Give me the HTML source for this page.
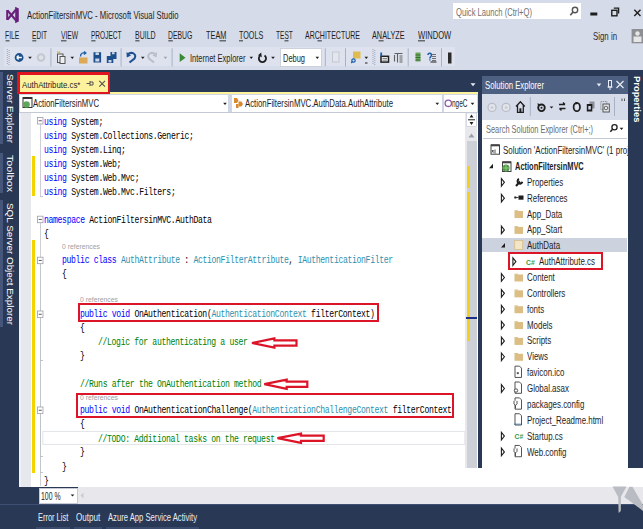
<!DOCTYPE html>
<html><head><meta charset="utf-8"><style>
html,body{margin:0;padding:0;}
body{width:643px;height:529px;overflow:hidden;position:relative;background:#d6dbe9;font-family:'Liberation Sans', sans-serif;}
.t{position:absolute;white-space:pre;transform-origin:0 0;}
.vt{position:absolute;white-space:pre;transform-origin:0 0;}
.mono{position:absolute;white-space:pre;transform-origin:0 0;font-family:'Liberation Mono', monospace;}
</style></head>
<body>
<div style="position:absolute;left:453px;top:3px;width:128px;height:16px;background:#ffffff;"></div><div style="position:absolute;left:4px;top:47px;width:450.5px;height:19px;background:#dde2ee;"></div><div style="position:absolute;left:279.5px;top:48px;width:42px;height:18.6px;background:#ffffff;box-sizing:border-box;border:1px solid #ccd1dc"></div><div style="position:absolute;left:0px;top:70px;width:643px;height:459px;background:#293955;"></div><div style="position:absolute;left:19px;top:92px;width:459px;height:2px;background:#fff29d;"></div><div style="position:absolute;left:17px;top:72px;width:93px;height:22px;background:#e0141e;"></div><div style="position:absolute;left:19.5px;top:74.5px;width:88px;height:17px;background:#fff29d;"></div><div style="position:absolute;left:19px;top:94px;width:459px;height:18px;background:#cfd6e5;"></div><div style="position:absolute;left:20px;top:95px;width:208px;height:16.5px;background:#ffffff;"></div><div style="position:absolute;left:231.5px;top:95px;width:210px;height:16.5px;background:#ffffff;"></div><div style="position:absolute;left:444px;top:95px;width:33px;height:16.5px;background:#ffffff;"></div><div style="position:absolute;left:19px;top:111.5px;width:459px;height:1px;background:#c4c9d6;"></div><div style="position:absolute;left:19px;top:112.5px;width:459px;height:374px;background:#ffffff;"></div><div style="position:absolute;left:19px;top:112.5px;width:12px;height:374px;background:#e6e8ed;"></div><div style="position:absolute;left:19px;top:112.5px;width:1.5px;height:374px;background:#eef2f6;"></div><div style="position:absolute;left:32px;top:155.5px;width:3.3px;height:40px;background:#f3d400;"></div><div style="position:absolute;left:32px;top:240px;width:3.3px;height:232.7px;background:#f3d400;"></div><div style="position:absolute;left:478px;top:468px;width:165px;height:19px;background:#ffffff;"></div><div style="position:absolute;left:465px;top:112.5px;width:12px;height:355.5px;background:#e8e8ec;"></div><div style="position:absolute;left:466.5px;top:141px;width:10px;height:327px;background:#cdd0d6;"></div><div style="position:absolute;left:467px;top:166px;width:3.3px;height:22px;background:#f0d020;"></div><div style="position:absolute;left:467px;top:191.6px;width:3.3px;height:149px;background:#f0d020;"></div><div style="position:absolute;left:466px;top:317.3px;width:11px;height:1.6px;background:#1c2f8c;"></div><div style="position:absolute;left:482px;top:75.5px;width:146px;height:392.5px;background:#ffffff;"></div><div style="position:absolute;left:482px;top:75.5px;width:146px;height:18px;background:#4d6082;"></div><div style="position:absolute;left:482px;top:93.5px;width:146px;height:26.5px;background:#d6dbe9;"></div><div style="position:absolute;left:482.5px;top:120px;width:144.5px;height:19px;background:#ffffff;box-sizing:border-box;border-bottom:1px solid #c4c9d6"></div><div style="position:absolute;left:0px;top:72px;width:3.2px;height:72px;background:#46567a;"></div><div style="position:absolute;left:0px;top:153px;width:3.2px;height:40px;background:#46567a;"></div><div style="position:absolute;left:0px;top:200px;width:3.2px;height:127px;background:#46567a;"></div><div style="position:absolute;left:628px;top:72px;width:15px;height:0px;background:#293955;"></div><div style="position:absolute;left:482px;top:237.5px;width:145px;height:14px;background:#cdd2df;"></div><div style="position:absolute;left:628px;top:70px;width:15px;height:398px;background:#293955;z-index:5"></div><div style="position:absolute;left:77.9px;top:302.6px;width:301.1px;height:19.899999999999977px;box-sizing:border-box;border:2.3px solid #dc1428;z-index:8"></div><div style="position:absolute;left:75.8px;top:392.7px;width:378.09999999999997px;height:25.30000000000001px;box-sizing:border-box;border:2.3px solid #dc1428;z-index:8"></div><div style="position:absolute;left:507.5px;top:252.3px;width:95.5px;height:18.0px;box-sizing:border-box;border:2.4px solid #dc1428;z-index:8"></div><svg style="position:absolute;left:0;top:0;z-index:8" width="643" height="529"><polygon points="252.00,343.00 274.40,338.40 274.40,340.40 296.50,340.40 296.50,345.60 274.40,345.60 274.40,347.60" fill="#ffffff" stroke="#dc1428" stroke-width="2.2" stroke-linejoin="miter"/></svg><svg style="position:absolute;left:0;top:0;z-index:8" width="643" height="529"><polygon points="264.30,384.20 286.70,379.60 286.70,381.60 307.30,381.60 307.30,386.80 286.70,386.80 286.70,388.80" fill="#ffffff" stroke="#dc1428" stroke-width="2.2" stroke-linejoin="miter"/></svg><svg style="position:absolute;left:0;top:0;z-index:8" width="643" height="529"><polygon points="277.50,438.20 301.00,433.60 301.00,435.60 323.70,435.60 323.70,440.80 301.00,440.80 301.00,442.80" fill="#ffffff" stroke="#dc1428" stroke-width="2.2" stroke-linejoin="miter"/></svg><div style="position:absolute;left:38.5px;top:487.5px;width:39px;height:16px;background:#ffffff;box-sizing:border-box;border:1px solid #c5cad6"></div><div style="position:absolute;left:36px;top:527px;width:34px;height:2px;background:#3b4b6e;"></div><div style="position:absolute;left:74px;top:527px;width:28px;height:2px;background:#3b4b6e;"></div><div style="position:absolute;left:105.5px;top:527px;width:93px;height:2px;background:#3b4b6e;"></div><div style="position:absolute;left:77.5px;top:487px;width:566px;height:16.5px;background:#e8e8ec;"></div><div style="position:absolute;left:0px;top:503.5px;width:643px;height:1px;background:#3f5075;"></div>
<div class="t" style="left:27.00px;top:9.59px;font:400 11.3px/11.3px 'Liberation Sans', sans-serif;color:#1e1e1e;transform:scaleX(0.6862);">ActionFiltersinMVC - Microsoft Visual Studio</div>
<div class="t" style="left:456.00px;top:6.88px;font:400 10.5px/10.5px 'Liberation Sans', sans-serif;color:#717171;transform:scaleX(0.7255);">Quick Launch (Ctrl+Q)</div>
<div class="t" style="left:593.00px;top:31.12px;font:400 10.8px/10.8px 'Liberation Sans', sans-serif;color:#2d2d30;transform:scaleX(0.7269);">Sign in</div>
<div class="t" style="left:5.40px;top:31.36px;font:400 10.4px/10.4px 'Liberation Sans', sans-serif;color:#1e1e1e;transform:scaleX(0.6514);">FILE</div>
<div class="t" style="left:32.00px;top:31.36px;font:400 10.4px/10.4px 'Liberation Sans', sans-serif;color:#1e1e1e;transform:scaleX(0.6337);">EDIT</div>
<div class="t" style="left:60.80px;top:31.36px;font:400 10.4px/10.4px 'Liberation Sans', sans-serif;color:#1e1e1e;transform:scaleX(0.6475);">VIEW</div>
<div class="t" style="left:91.00px;top:31.36px;font:400 10.4px/10.4px 'Liberation Sans', sans-serif;color:#1e1e1e;transform:scaleX(0.6309);">PROJECT</div>
<div class="t" style="left:135.00px;top:31.36px;font:400 10.4px/10.4px 'Liberation Sans', sans-serif;color:#1e1e1e;transform:scaleX(0.6730);">BUILD</div>
<div class="t" style="left:168.00px;top:31.36px;font:400 10.4px/10.4px 'Liberation Sans', sans-serif;color:#1e1e1e;transform:scaleX(0.6603);">DEBUG</div>
<div class="t" style="left:205.60px;top:31.36px;font:400 10.4px/10.4px 'Liberation Sans', sans-serif;color:#1e1e1e;transform:scaleX(0.7065);">TEAM</div>
<div class="t" style="left:238.70px;top:31.36px;font:400 10.4px/10.4px 'Liberation Sans', sans-serif;color:#1e1e1e;transform:scaleX(0.6934);">TOOLS</div>
<div class="t" style="left:276.00px;top:31.36px;font:400 10.4px/10.4px 'Liberation Sans', sans-serif;color:#1e1e1e;transform:scaleX(0.6325);">TEST</div>
<div class="t" style="left:305.00px;top:31.36px;font:400 10.4px/10.4px 'Liberation Sans', sans-serif;color:#1e1e1e;transform:scaleX(0.6756);">ARCHITECTURE</div>
<div class="t" style="left:372.00px;top:31.36px;font:400 10.4px/10.4px 'Liberation Sans', sans-serif;color:#1e1e1e;transform:scaleX(0.7018);">ANALYZE</div>
<div class="t" style="left:417.80px;top:31.36px;font:400 10.4px/10.4px 'Liberation Sans', sans-serif;color:#1e1e1e;transform:scaleX(0.7282);">WINDOW</div>
<div class="t" style="left:21.60px;top:79.97px;font:400 9.8px/9.8px 'Liberation Sans', sans-serif;color:#1e1e1e;transform:scaleX(0.8002);">AuthAttribute.cs*</div>
<div class="t" style="left:13.90px;top:74.00px;font:400 9.3px/9.3px 'Liberation Sans', sans-serif;color:#ffffff;transform:rotate(90deg) scaleX(1.0682);">Server Explorer</div>
<div class="t" style="left:13.90px;top:155.00px;font:400 9.3px/9.3px 'Liberation Sans', sans-serif;color:#ffffff;transform:rotate(90deg) scaleX(1.1546);">Toolbox</div>
<div class="t" style="left:13.90px;top:203.00px;font:400 9.3px/9.3px 'Liberation Sans', sans-serif;color:#ffffff;transform:rotate(90deg) scaleX(1.0619);">SQL Server Object Explorer</div>
<div class="t" style="left:642.25px;top:75.60px;font:700 9.8px/9.8px 'Liberation Sans', sans-serif;color:#ffffff;transform:rotate(90deg) scaleX(0.9573);z-index:6;">Properties</div>
<div class="t" style="left:484.50px;top:80.08px;font:400 10.5px/10.5px 'Liberation Sans', sans-serif;color:#ffffff;transform:scaleX(0.7378);">Solution Explorer</div>
<div class="t" style="left:485.50px;top:123.58px;font:400 10.5px/10.5px 'Liberation Sans', sans-serif;color:#6d6d6d;transform:scaleX(0.7066);">Search Solution Explorer (Ctrl+;)</div>
<div class="t" style="left:503.30px;top:145.17px;font:400 10.5px/10.5px 'Liberation Sans', sans-serif;color:#1e1e1e;transform:scaleX(0.755);">Solution &#x27;ActionFiltersinMVC&#x27; (1 project)</div>
<div class="t" style="left:515.00px;top:161.03px;font:700 10.5px/10.5px 'Liberation Sans', sans-serif;color:#1e1e1e;transform:scaleX(0.71);">ActionFiltersinMVC</div>
<div class="t" style="left:526.60px;top:176.89px;font:400 10.5px/10.5px 'Liberation Sans', sans-serif;color:#1e1e1e;transform:scaleX(0.755);">Properties</div>
<div class="t" style="left:526.60px;top:192.75px;font:400 10.5px/10.5px 'Liberation Sans', sans-serif;color:#1e1e1e;transform:scaleX(0.755);">References</div>
<div class="t" style="left:526.60px;top:208.61px;font:400 10.5px/10.5px 'Liberation Sans', sans-serif;color:#1e1e1e;transform:scaleX(0.755);">App_Data</div>
<div class="t" style="left:526.60px;top:224.47px;font:400 10.5px/10.5px 'Liberation Sans', sans-serif;color:#1e1e1e;transform:scaleX(0.755);">App_Start</div>
<div class="t" style="left:526.60px;top:240.33px;font:400 10.5px/10.5px 'Liberation Sans', sans-serif;color:#1e1e1e;transform:scaleX(0.755);">AuthData</div>
<div class="t" style="left:538.60px;top:256.19px;font:400 10.5px/10.5px 'Liberation Sans', sans-serif;color:#1e1e1e;transform:scaleX(0.755);">AuthAttribute.cs</div>
<div class="t" style="left:526.60px;top:272.06px;font:400 10.5px/10.5px 'Liberation Sans', sans-serif;color:#1e1e1e;transform:scaleX(0.755);">Content</div>
<div class="t" style="left:526.60px;top:287.92px;font:400 10.5px/10.5px 'Liberation Sans', sans-serif;color:#1e1e1e;transform:scaleX(0.755);">Controllers</div>
<div class="t" style="left:526.60px;top:303.77px;font:400 10.5px/10.5px 'Liberation Sans', sans-serif;color:#1e1e1e;transform:scaleX(0.755);">fonts</div>
<div class="t" style="left:526.60px;top:319.63px;font:400 10.5px/10.5px 'Liberation Sans', sans-serif;color:#1e1e1e;transform:scaleX(0.755);">Models</div>
<div class="t" style="left:526.60px;top:335.49px;font:400 10.5px/10.5px 'Liberation Sans', sans-serif;color:#1e1e1e;transform:scaleX(0.755);">Scripts</div>
<div class="t" style="left:526.60px;top:351.35px;font:400 10.5px/10.5px 'Liberation Sans', sans-serif;color:#1e1e1e;transform:scaleX(0.755);">Views</div>
<div class="t" style="left:526.60px;top:367.21px;font:400 10.5px/10.5px 'Liberation Sans', sans-serif;color:#1e1e1e;transform:scaleX(0.755);">favicon.ico</div>
<div class="t" style="left:526.60px;top:383.07px;font:400 10.5px/10.5px 'Liberation Sans', sans-serif;color:#1e1e1e;transform:scaleX(0.755);">Global.asax</div>
<div class="t" style="left:526.60px;top:398.94px;font:400 10.5px/10.5px 'Liberation Sans', sans-serif;color:#1e1e1e;transform:scaleX(0.755);">packages.config</div>
<div class="t" style="left:526.60px;top:414.80px;font:400 10.5px/10.5px 'Liberation Sans', sans-serif;color:#1e1e1e;transform:scaleX(0.755);">Project_Readme.html</div>
<div class="t" style="left:526.60px;top:430.66px;font:400 10.5px/10.5px 'Liberation Sans', sans-serif;color:#1e1e1e;transform:scaleX(0.755);">Startup.cs</div>
<div class="t" style="left:526.60px;top:446.51px;font:400 10.5px/10.5px 'Liberation Sans', sans-serif;color:#1e1e1e;transform:scaleX(0.755);">Web.config</div>
<div class="t" style="left:40.50px;top:490.88px;font:400 10.5px/10.5px 'Liberation Sans', sans-serif;color:#1e1e1e;transform:scaleX(0.6548);">100 %</div>
<div class="t" style="left:38.00px;top:511.68px;font:400 10.5px/10.5px 'Liberation Sans', sans-serif;color:#f0f3f8;transform:scaleX(0.7090);">Error List</div>
<div class="t" style="left:76.00px;top:511.68px;font:400 10.5px/10.5px 'Liberation Sans', sans-serif;color:#e8ecf4;transform:scaleX(0.7675);">Output</div>
<div class="t" style="left:107.70px;top:511.68px;font:400 10.5px/10.5px 'Liberation Sans', sans-serif;color:#e8ecf4;transform:scaleX(0.7296);">Azure App Service Activity</div>
<div class="t" style="left:32.80px;top:97.89px;font:400 11.3px/11.3px 'Liberation Sans', sans-serif;color:#1e1e1e;transform:scaleX(0.6872);">ActionFiltersinMVC</div>
<div class="t" style="left:244.50px;top:97.89px;font:400 11.3px/11.3px 'Liberation Sans', sans-serif;color:#1e1e1e;transform:scaleX(0.6892);">ActionFiltersinMVC.AuthData.AuthAttribute</div>
<div class="t" style="left:452.00px;top:97.89px;font:400 11.3px/11.3px 'Liberation Sans', sans-serif;color:#1e1e1e;transform:scaleX(0.5737);">ngeC</div>
<div class="t" style="left:190.00px;top:53.08px;font:400 10.5px/10.5px 'Liberation Sans', sans-serif;color:#1e1e1e;transform:scaleX(0.7150);">Internet Explorer</div>
<div class="t" style="left:282.80px;top:53.15px;font:400 11px/11px 'Liberation Sans', sans-serif;color:#1e1e1e;transform:scaleX(0.6786);">Debug</div>
<div class="t" style="left:62.00px;top:242.90px;font:400 8px/8px 'Liberation Sans', sans-serif;color:#a0a0a0;transform:scaleX(0.8545);">0 references</div>
<div class="t" style="left:80.00px;top:295.50px;font:400 8px/8px 'Liberation Sans', sans-serif;color:#a0a0a0;transform:scaleX(0.8545);">0 references</div>
<div class="t" style="left:80.00px;top:394.20px;font:400 8px/8px 'Liberation Sans', sans-serif;color:#a0a0a0;transform:scaleX(0.8545);">0 references</div>
<div class="mono" style="left:44.00px;top:116.64px;font-size:11px;line-height:11px;letter-spacing:-0.478px;transform:scaleX(0.7400)"><span style="color:#0000ff">using</span><span style="color:#000000"> System;</span></div>
<div class="mono" style="left:44.00px;top:130.64px;font-size:11px;line-height:11px;letter-spacing:-0.478px;transform:scaleX(0.7400)"><span style="color:#0000ff">using</span><span style="color:#000000"> System.Collections.Generic;</span></div>
<div class="mono" style="left:44.00px;top:144.64px;font-size:11px;line-height:11px;letter-spacing:-0.478px;transform:scaleX(0.7400)"><span style="color:#0000ff">using</span><span style="color:#000000"> System.Linq;</span></div>
<div class="mono" style="left:44.00px;top:158.64px;font-size:11px;line-height:11px;letter-spacing:-0.478px;transform:scaleX(0.7400)"><span style="color:#0000ff">using</span><span style="color:#000000"> System.Web;</span></div>
<div class="mono" style="left:44.00px;top:172.64px;font-size:11px;line-height:11px;letter-spacing:-0.478px;transform:scaleX(0.7400)"><span style="color:#0000ff">using</span><span style="color:#000000"> System.Web.Mvc;</span></div>
<div class="mono" style="left:44.00px;top:186.64px;font-size:11px;line-height:11px;letter-spacing:-0.478px;transform:scaleX(0.7400)"><span style="color:#0000ff">using</span><span style="color:#000000"> System.Web.Mvc.Filters;</span></div>
<div class="mono" style="left:44.00px;top:215.14px;font-size:11px;line-height:11px;letter-spacing:-0.478px;transform:scaleX(0.7400)"><span style="color:#0000ff">namespace</span><span style="color:#000000"> ActionFiltersinMVC.AuthData</span></div>
<div class="mono" style="left:44.00px;top:229.14px;font-size:11px;line-height:11px;letter-spacing:-0.478px;transform:scaleX(0.7400)"><span style="color:#000000">{</span></div>
<div class="mono" style="left:62.12px;top:254.94px;font-size:11px;line-height:11px;letter-spacing:-0.478px;transform:scaleX(0.7400)"><span style="color:#0000ff">public</span><span style="color:#000000"> </span><span style="color:#0000ff">class</span><span style="color:#000000"> </span><span style="color:#2b91af">AuthAttribute</span><span style="color:#000000"> : </span><span style="color:#2b91af">ActionFilterAttribute</span><span style="color:#000000">, </span><span style="color:#2b91af">IAuthenticationFilter</span></div>
<div class="mono" style="left:62.12px;top:269.14px;font-size:11px;line-height:11px;letter-spacing:-0.478px;transform:scaleX(0.7400)"><span style="color:#000000">{</span></div>
<div class="mono" style="left:80.24px;top:309.14px;font-size:11px;line-height:11px;letter-spacing:-0.478px;transform:scaleX(0.7400)"><span style="color:#0000ff">public</span><span style="color:#000000"> </span><span style="color:#0000ff">void</span><span style="color:#000000"> OnAuthentication(</span><span style="color:#2b91af">AuthenticationContext</span><span style="color:#000000"> filterContext)</span></div>
<div class="mono" style="left:80.24px;top:323.14px;font-size:11px;line-height:11px;letter-spacing:-0.478px;transform:scaleX(0.7400)"><span style="color:#000000">{</span></div>
<div class="mono" style="left:98.36px;top:336.64px;font-size:11px;line-height:11px;letter-spacing:-0.478px;transform:scaleX(0.7400)"><span style="color:#008000">//Logic for authenticating a user</span></div>
<div class="mono" style="left:80.24px;top:350.64px;font-size:11px;line-height:11px;letter-spacing:-0.478px;transform:scaleX(0.7400)"><span style="color:#000000">}</span></div>
<div class="mono" style="left:80.24px;top:379.14px;font-size:11px;line-height:11px;letter-spacing:-0.478px;transform:scaleX(0.7400)"><span style="color:#008000">//Runs after the OnAuthentication method</span></div>
<div class="mono" style="left:80.24px;top:405.14px;font-size:11px;line-height:11px;letter-spacing:-0.478px;transform:scaleX(0.7400)"><span style="color:#0000ff">public</span><span style="color:#000000"> </span><span style="color:#0000ff">void</span><span style="color:#000000"> OnAuthenticationChallenge(</span><span style="color:#2b91af">AuthenticationChallengeContext</span><span style="color:#000000"> filterContext</span></div>
<div class="mono" style="left:80.24px;top:419.14px;font-size:11px;line-height:11px;letter-spacing:-0.478px;transform:scaleX(0.7400)"><span style="color:#000000">{</span></div>
<div class="mono" style="left:98.36px;top:433.54px;font-size:11px;line-height:11px;letter-spacing:-0.478px;transform:scaleX(0.7400)"><span style="color:#008000">//TODO: Additional tasks on the request</span></div>
<div class="mono" style="left:80.24px;top:447.14px;font-size:11px;line-height:11px;letter-spacing:-0.478px;transform:scaleX(0.7400)"><span style="color:#000000">}</span></div>
<div class="mono" style="left:62.12px;top:461.64px;font-size:11px;line-height:11px;letter-spacing:-0.478px;transform:scaleX(0.7400)"><span style="color:#000000">}</span></div>
<div class="mono" style="left:44.00px;top:475.64px;font-size:11px;line-height:11px;letter-spacing:-0.478px;transform:scaleX(0.7400)"><span style="color:#000000">}</span></div>
<svg style="position:absolute;left:0;top:0;z-index:7" width="643" height="529" viewBox="0 0 643 529"><g fill="none" stroke="#68217a" stroke-width="2" stroke-linecap="butt"><path d="M7.2,10 L7.2,20"/><path d="M7.5,10.5 L16.5,21"/><path d="M7.5,19.5 L16.5,9"/></g><polygon points="15.2,6.8 18.8,8.6 18.8,21.6 15.2,23.3" fill="#68217a"/><circle cx="575" cy="10" r="2.7" fill="none" stroke="#555" stroke-width="1.4"/><path d="M573,12 L570.3,15.3" stroke="#555" stroke-width="1.6"/><rect x="590.3" y="12.5" width="7" height="3" fill="#1e1e1e"/><rect x="611.8" y="10.3" width="5.2" height="5.5" fill="none" stroke="#1e1e1e" stroke-width="1.4"/><path d="M613.8,8.2 H618.6 V13.5" fill="none" stroke="#1e1e1e" stroke-width="1.3"/><path d="M634.3,9.8 L640.5,16 M640.5,9.8 L634.3,16" stroke="#1e1e1e" stroke-width="1.4"/><rect x="631.6" y="29" width="12" height="14.3" fill="#8d8f94"/><circle cx="637.5" cy="33.5" r="2.2" fill="#e6e6e6"/><rect x="633.5" y="36.5" width="8" height="5.5" fill="#e6e6e6"/><rect x="5.6" y="40.4" width="3.9000000000000004" height="0.9" fill="#1e1e1e"/><rect x="32.3" y="40.4" width="4.0" height="0.9" fill="#1e1e1e"/><rect x="61" y="40.4" width="5.5" height="0.9" fill="#1e1e1e"/><rect x="91.3" y="40.4" width="4.200000000000003" height="0.9" fill="#1e1e1e"/><rect x="135.3" y="40.4" width="4.199999999999989" height="0.9" fill="#1e1e1e"/><rect x="168.3" y="40.4" width="4.5" height="0.9" fill="#1e1e1e"/><rect x="219.5" y="40.4" width="6.5" height="0.9" fill="#1e1e1e"/><rect x="239" y="40.4" width="4" height="0.9" fill="#1e1e1e"/><rect x="284.5" y="40.4" width="4.0" height="0.9" fill="#1e1e1e"/><rect x="317.5" y="40.4" width="4.300000000000011" height="0.9" fill="#1e1e1e"/><rect x="378.6" y="40.4" width="5.0" height="0.9" fill="#1e1e1e"/><rect x="418" y="40.4" width="7" height="0.9" fill="#1e1e1e"/><rect x="6.8" y="49" width="1" height="1" fill="#9aa3b5"/><rect x="8.6" y="50" width="1" height="1" fill="#9aa3b5"/><rect x="6.8" y="51" width="1" height="1" fill="#9aa3b5"/><rect x="8.6" y="52" width="1" height="1" fill="#9aa3b5"/><rect x="6.8" y="53" width="1" height="1" fill="#9aa3b5"/><rect x="8.6" y="54" width="1" height="1" fill="#9aa3b5"/><rect x="6.8" y="55" width="1" height="1" fill="#9aa3b5"/><rect x="8.6" y="56" width="1" height="1" fill="#9aa3b5"/><rect x="6.8" y="57" width="1" height="1" fill="#9aa3b5"/><rect x="8.6" y="58" width="1" height="1" fill="#9aa3b5"/><rect x="6.8" y="59" width="1" height="1" fill="#9aa3b5"/><rect x="8.6" y="60" width="1" height="1" fill="#9aa3b5"/><rect x="6.8" y="61" width="1" height="1" fill="#9aa3b5"/><rect x="8.6" y="62" width="1" height="1" fill="#9aa3b5"/><rect x="6.8" y="63" width="1" height="1" fill="#9aa3b5"/><rect x="8.6" y="64" width="1" height="1" fill="#9aa3b5"/><rect x="372.5" y="49" width="1" height="1" fill="#9aa3b5"/><rect x="374.3" y="50" width="1" height="1" fill="#9aa3b5"/><rect x="372.5" y="51" width="1" height="1" fill="#9aa3b5"/><rect x="374.3" y="52" width="1" height="1" fill="#9aa3b5"/><rect x="372.5" y="53" width="1" height="1" fill="#9aa3b5"/><rect x="374.3" y="54" width="1" height="1" fill="#9aa3b5"/><rect x="372.5" y="55" width="1" height="1" fill="#9aa3b5"/><rect x="374.3" y="56" width="1" height="1" fill="#9aa3b5"/><rect x="372.5" y="57" width="1" height="1" fill="#9aa3b5"/><rect x="374.3" y="58" width="1" height="1" fill="#9aa3b5"/><rect x="372.5" y="59" width="1" height="1" fill="#9aa3b5"/><rect x="374.3" y="60" width="1" height="1" fill="#9aa3b5"/><rect x="372.5" y="61" width="1" height="1" fill="#9aa3b5"/><rect x="374.3" y="62" width="1" height="1" fill="#9aa3b5"/><rect x="372.5" y="63" width="1" height="1" fill="#9aa3b5"/><rect x="374.3" y="64" width="1" height="1" fill="#9aa3b5"/><circle cx="19.1" cy="57.5" r="4.4" fill="#1c4f8d"/><path d="M16.6,57.5 H21.8 M16.6,57.5 L18.6,55.5 M16.6,57.5 L18.6,59.5" stroke="#fff" stroke-width="1.3"/><circle cx="41" cy="57.5" r="4.3" fill="#c3c7cf"/><circle cx="41" cy="57.5" r="2.3" fill="#dfe2e8"/><polygon points="28.2,56.699999999999996 31.8,56.699999999999996 30,58.9" fill="#1e1e1e"/><polygon points="70.5,56.699999999999996 74.1,56.699999999999996 72.3,58.9" fill="#1e1e1e"/><polygon points="141.0,56.699999999999996 144.60000000000002,56.699999999999996 142.8,58.9" fill="#1e1e1e"/><polygon points="249.5,56.699999999999996 253.10000000000002,56.699999999999996 251.3,58.9" fill="#1e1e1e"/><polygon points="271.2,56.699999999999996 274.8,56.699999999999996 273,58.9" fill="#1e1e1e"/><polygon points="315.5,56.699999999999996 319.1,56.699999999999996 317.3,58.9" fill="#1e1e1e"/><polygon points="364.5,56.699999999999996 368.1,56.699999999999996 366.3,58.9" fill="#1e1e1e"/><polygon points="163.6,56.699999999999996 167.20000000000002,56.699999999999996 165.4,58.9" fill="#9aa0aa"/><rect x="50.4" y="48.3" width="1" height="18.10000000000001" fill="#a9b2c4"/><rect x="120.6" y="48.3" width="1" height="18.10000000000001" fill="#a9b2c4"/><rect x="171.6" y="48.3" width="1" height="18.10000000000001" fill="#a9b2c4"/><rect x="324.8" y="48.3" width="1" height="18.10000000000001" fill="#a9b2c4"/><rect x="345" y="48.3" width="1" height="18.10000000000001" fill="#a9b2c4"/><rect x="407.7" y="48.3" width="1" height="18.10000000000001" fill="#a9b2c4"/><rect x="441" y="48.3" width="1" height="18.10000000000001" fill="#a9b2c4"/><rect x="57.5" y="54" width="5.5" height="8.5" fill="#eef0f4" stroke="#555" stroke-width="1"/><rect x="60" y="56.5" width="5" height="7" fill="#eef0f4" stroke="#555" stroke-width="1"/><path d="M57.2,51.5 l1.5,1.5 l1.5,-1.5" stroke="#c9b86a" stroke-width="1.2" fill="none"/><rect x="79" y="57.5" width="8.5" height="6" fill="#dcaa55"/><path d="M80.5,56.5 C80.5,53 83,52.5 85,53 M84,51.5 L85.8,53 L84,54.6" stroke="#1c5fa8" stroke-width="1.4" fill="none"/><rect x="93.5" y="52.2" width="7.6" height="10.3" fill="#1c4f8d"/><rect x="95.5" y="52.4" width="3.4" height="2.6" fill="#cfd6e5"/><rect x="95.3" y="58.5" width="4" height="3" fill="#cfd6e5"/><rect x="110.5" y="52" width="6" height="7" fill="#1c4f8d"/><rect x="106.8" y="56" width="6.5" height="7" fill="#1c4f8d"/><rect x="108.5" y="60" width="3" height="2.5" fill="#cfd6e5"/><rect x="112" y="52.2" width="2.6" height="2" fill="#cfd6e5"/><path d="M127.3,54.5 C132,51 137,54 134.5,58.5 L129.5,62.5" stroke="#1c4f8d" stroke-width="2" fill="none"/><polygon points="126.5,52 126.8,57.5 131,55.5" fill="#1c4f8d"/><path d="M156,54.5 C151.5,51 146.5,54 149,58.5 L154,62.5" stroke="#b9bec8" stroke-width="2" fill="none"/><polygon points="157,52 156.7,57.5 152.5,55.5" fill="#b9bec8"/><polygon points="179.7,53.3 185.5,57.7 179.7,62.1" fill="#388a34"/><path d="M264.5,55.5 A3.6,3.6 0 1 1 259.8,56" stroke="#1e1e1e" stroke-width="1.8" fill="none"/><polygon points="261.2,52.4 261.8,57.2 258,55.2" fill="#1e1e1e"/><rect x="332.5" y="52" width="6.5" height="10" fill="#e3e6ec" stroke="#c3c7d0" stroke-width="1"/><rect x="353" y="51.5" width="7.5" height="7" fill="#e0bb50"/><circle cx="353.5" cy="60.5" r="1.7" fill="none" stroke="#1c5fa8" stroke-width="1.2"/><path d="M352.5,61.5 L351.2,63" stroke="#1c5fa8" stroke-width="1.2"/><rect x="365" y="62.5" width="2.5" height="1" fill="#1e1e1e"/><rect x="381" y="56.3" width="7.5" height="5.8" fill="#f2f4f8" stroke="#1e1e1e" stroke-width="1.5"/><path d="M382.5,58.5 h4.5 M382.5,60.2 h4.5" stroke="#555" stroke-width="0.7"/><path d="M381.2,52.5 v4" stroke="#1c5fa8" stroke-width="1.8"/><path d="M394.5,55 v6.5 M394.5,53.5 h8 M397.5,53.5 v9 M399.5,56 h3 M399.5,58 h3 M399.5,60 h3 M399.5,62 h3" stroke="#606060" stroke-width="1.1" fill="none"/><rect x="415.5" y="52.5" width="5" height="9" fill="#6aa85a"/><path d="M415.5,55 h5 M415.5,57.5 h5 M415.5,60 h5" stroke="#2d4a2a" stroke-width="0.7"/><path d="M428,55 C428,52.5 431.5,52.5 431.5,55 C431.5,56.5 429.8,56.8 429.8,58.5" stroke="#1c5fa8" stroke-width="1.5" fill="none"/><rect x="429.2" y="59.3" width="1.3" height="1.3" fill="#1c5fa8"/><path d="M432,54.5 h4 M432,56.5 h4 M432,58.5 h4 M432,60.5 h4" stroke="#707070" stroke-width="1"/><path d="M430.5,62 h6" stroke="#1e1e1e" stroke-width="1"/><rect x="448" y="52.5" width="3.5" height="11" fill="#2a2a2a"/><path d="M86.5,83.5 H90 M90,81 V86 M90,82 H93 V85 H90" stroke="#555" stroke-width="1" fill="none"/><path d="M99.3,80.8 L105,86.7 M105,80.8 L99.3,86.7" stroke="#555" stroke-width="1.2"/><polygon points="470.5,83.3 475.5,83.3 473,86.3" fill="#e8ecf4"/><rect x="23" y="97.5" width="9" height="10" fill="#fff" stroke="#333" stroke-width="1"/><rect x="23" y="97" width="9" height="2" fill="#333"/><circle cx="26.5" cy="104.5" r="3.3" fill="#5fa55a"/><polygon points="223.2,102.7 226.8,102.7 225,104.89999999999999" fill="#1e1e1e"/><polygon points="435.5,102.7 439.1,102.7 437.3,104.89999999999999" fill="#1e1e1e"/><polygon points="470.7,102.7 474.3,102.7 472.5,104.89999999999999" fill="#1e1e1e"/><rect x="228" y="95" width="3.5" height="16.5" fill="#cfd6e5"/><path d="M234,98 l3,0 l1.5,2.5 l-1.5,2.5 l-3,0 z M238.5,101.5 l3,0 l1.5,2.5 l-1.5,2.5 l-3,0 z" fill="#d9892f"/><rect x="236" y="104" width="2.5" height="4" fill="#d9892f"/><circle cx="448.3" cy="103.3" r="3.2" fill="none" stroke="#8e5aa8" stroke-width="1.3"/><rect x="466.5" y="113" width="10" height="13.5" fill="#fff" stroke="#ccd" stroke-width="0.7"/><path d="M468,119.8 h7" stroke="#1e1e1e" stroke-width="1"/><polygon points="469.5,117.5 473.5,117.5 471.5,114.5" fill="#1e1e1e"/><polygon points="469.5,122 473.5,122 471.5,125" fill="#1e1e1e"/><polygon points="468.5,137.5 474.5,137.5 471.5,133.5" fill="#9aa0aa"/><rect x="40" y="124.2" width="0.8" height="71.8" fill="#c0c4cc"/><rect x="40" y="222.8" width="0.8" height="263.2" fill="#c0c4cc"/><rect x="40" y="263.8" width="0.8" height="208.2" fill="#c0c4cc"/><rect x="40" y="317.5" width="0.8" height="42.5" fill="#c0c4cc"/><rect x="40" y="413.5" width="0.8" height="42.5" fill="#c0c4cc"/><rect x="40" y="196" width="3" height="0.8" fill="#b6bac2"/><rect x="40" y="360" width="3" height="0.8" fill="#b6bac2"/><rect x="40" y="456" width="3" height="0.8" fill="#b6bac2"/><rect x="40" y="472" width="3" height="0.8" fill="#b6bac2"/><rect x="37.5" y="117.5" width="5.5" height="6.5" fill="#fff" stroke="#9ba0a8" stroke-width="0.8"/><path d="M38.7,120.75 h3.1" stroke="#333" stroke-width="0.8"/><rect x="37.5" y="216.2" width="5.5" height="6.5" fill="#fff" stroke="#9ba0a8" stroke-width="0.8"/><path d="M38.7,219.45 h3.1" stroke="#333" stroke-width="0.8"/><rect x="37.5" y="257.2" width="5.5" height="6.5" fill="#fff" stroke="#9ba0a8" stroke-width="0.8"/><path d="M38.7,260.45 h3.1" stroke="#333" stroke-width="0.8"/><rect x="37.5" y="311" width="5.5" height="6.5" fill="#fff" stroke="#9ba0a8" stroke-width="0.8"/><path d="M38.7,314.25 h3.1" stroke="#333" stroke-width="0.8"/><rect x="37.5" y="407" width="5.5" height="6.5" fill="#fff" stroke="#9ba0a8" stroke-width="0.8"/><path d="M38.7,410.25 h3.1" stroke="#333" stroke-width="0.8"/><rect x="42.8" y="431.4" width="422" height="13" fill="none" stroke="#e2e4e8" stroke-width="1"/><polygon points="596.7,83.5 601.2,83.5 599,86.5" fill="#e8ecf4"/><rect x="608.5" y="80.5" width="3" height="6.5" fill="none" stroke="#e8ecf4" stroke-width="1"/><path d="M607.5,87 h5 M610,87 v3" stroke="#e8ecf4" stroke-width="1"/><path d="M616.5,81 L623.5,88 M623.5,81 L616.5,88" stroke="#e8ecf4" stroke-width="1.2"/><circle cx="492" cy="107.4" r="4" fill="#e4e6ec" stroke="#b9bdc6" stroke-width="1.3"/><circle cx="506.1" cy="107.4" r="4" fill="#e4e6ec" stroke="#b9bdc6" stroke-width="1.3"/><circle cx="492" cy="107.4" r="1.5" fill="#c9ccd4"/><circle cx="506.1" cy="107.4" r="1.5" fill="#c9ccd4"/><path d="M516,106.5 L520.4,101.8 L524.8,106.5 M517.5,105 V112.3 H523.3 V105" stroke="#1e1e1e" stroke-width="1.3" fill="none"/><rect x="519.4" y="108.3" width="2" height="4" fill="#1e1e1e"/><rect x="529.8" y="97" width="1" height="19" fill="#a9b2c4"/><rect x="614" y="97" width="1" height="19" fill="#a9b2c4"/><circle cx="541.5" cy="107.8" r="3.3" fill="none" stroke="#1e1e1e" stroke-width="1.8"/><circle cx="541.5" cy="107.8" r="1" fill="#1e1e1e"/><polygon points="537.5,103 540,104.5 538,106" fill="#1e1e1e"/><polygon points="549.7,106.4 553.3,106.4 551.5,108.6" fill="#1e1e1e"/><path d="M559,104.5 h6 M563,102.5 l2,2 M565.5,108.5 h-6 M561.5,110.5 l-2,-2" stroke="#1e1e1e" stroke-width="1.4" fill="none"/><ellipse cx="576.8" cy="107" rx="3.2" ry="4.2" fill="none" stroke="#1e1e1e" stroke-width="1.7"/><path d="M576.8,104.5 v5" stroke="#e8eaf0" stroke-width="1.2"/><polygon points="575.5,101.8 578.5,103.3 575.5,104.8" fill="#1e1e1e"/><rect x="589.5" y="101.5" width="5" height="7" fill="#8d9099"/><rect x="586.8" y="104" width="5.5" height="7.5" fill="#1e1e1e"/><rect x="588.3" y="106" width="2.5" height="3.5" fill="#cfd6e5"/><rect x="600.8" y="101.5" width="6" height="8" fill="none" stroke="#777" stroke-width="0.9" stroke-dasharray="1,1"/><rect x="603" y="104" width="6.3" height="8" fill="#e8eaee" stroke="#555" stroke-width="1"/><circle cx="606" cy="108" r="1.8" fill="none" stroke="#555" stroke-width="0.9"/><path d="M622,98.5 v2.5 M624.5,98.5 v2.5" stroke="#555" stroke-width="1"/><circle cx="614.5" cy="127.3" r="2.6" fill="none" stroke="#1e1e1e" stroke-width="1.3"/><path d="M612.6,129.2 L610.3,131.8" stroke="#1e1e1e" stroke-width="1.5"/><polygon points="619.7,127.70000000000002 623.3,127.70000000000002 621.5,129.9" fill="#1e1e1e"/><polygon points="493.0,163.76 493.0,168.15999999999997 489.0,168.15999999999997" fill="#1e1e1e"/><polygon points="505.0,243.06 505.0,247.45999999999998 501.0,247.45999999999998" fill="#1e1e1e"/><polygon points="501.4,178.51999999999998 504.4,182.32 501.4,186.12" fill="#fff" stroke="#1e1e1e" stroke-width="1.1"/><polygon points="501.4,194.38 504.4,198.18 501.4,201.98000000000002" fill="#fff" stroke="#1e1e1e" stroke-width="1.1"/><polygon points="501.4,226.09999999999997 504.4,229.89999999999998 501.4,233.7" fill="#fff" stroke="#1e1e1e" stroke-width="1.1"/><polygon points="501.4,273.68 504.4,277.48 501.4,281.28000000000003" fill="#fff" stroke="#1e1e1e" stroke-width="1.1"/><polygon points="501.4,289.54 504.4,293.34000000000003 501.4,297.14000000000004" fill="#fff" stroke="#1e1e1e" stroke-width="1.1"/><polygon points="501.4,305.4 504.4,309.2 501.4,313.0" fill="#fff" stroke="#1e1e1e" stroke-width="1.1"/><polygon points="501.4,321.25999999999993 504.4,325.05999999999995 501.4,328.85999999999996" fill="#fff" stroke="#1e1e1e" stroke-width="1.1"/><polygon points="501.4,337.11999999999995 504.4,340.91999999999996 501.4,344.71999999999997" fill="#fff" stroke="#1e1e1e" stroke-width="1.1"/><polygon points="501.4,352.97999999999996 504.4,356.78 501.4,360.58" fill="#fff" stroke="#1e1e1e" stroke-width="1.1"/><polygon points="501.4,384.7 504.4,388.5 501.4,392.3" fill="#fff" stroke="#1e1e1e" stroke-width="1.1"/><polygon points="501.4,432.28000000000003 504.4,436.08000000000004 501.4,439.88000000000005" fill="#fff" stroke="#1e1e1e" stroke-width="1.1"/><polygon points="501.4,448.13999999999993 504.4,451.93999999999994 501.4,455.73999999999995" fill="#fff" stroke="#1e1e1e" stroke-width="1.1"/><polygon points="512.9,257.82 515.9,261.62 512.9,265.42" fill="#fff" stroke="#1e1e1e" stroke-width="1.1"/><rect x="491" y="145" width="8.5" height="9.2" fill="#fff" stroke="#424242" stroke-width="1"/><rect x="491" y="144.3" width="8.5" height="2" fill="#424242"/><path d="M492,150 l1.5,2.5 M492,152.5 l1.5,-2.5 M495,149.5 v4" stroke="#424242" stroke-width="0.9"/><rect x="502.5" y="162" width="8.5" height="9.5" fill="#fff" stroke="#424242" stroke-width="1"/><rect x="502.5" y="161.3" width="8.5" height="2" fill="#424242"/><circle cx="506" cy="168" r="3.6" fill="#4f9a43"/><path d="M502.6,168 h7 M506,164.5 v7" stroke="#a8d59f" stroke-width="0.7"/><path d="M516,186 L520,181.5" stroke="#1e1e1e" stroke-width="2"/><path d="M519,179 A2.4,2.4 0 1 0 522.3,181.7" stroke="#1e1e1e" stroke-width="2" fill="none"/><rect x="514.3" y="196.5" width="2" height="2" fill="#1e1e1e"/><rect x="516" y="197.2" width="2.5" height="0.8" fill="#1e1e1e"/><rect x="518.5" y="195.5" width="5" height="4.2" fill="#1e1e1e"/><rect x="514.5" y="211.04" width="8.5" height="7" fill="#dcbd84"/><rect x="514.5" y="210.23999999999998" width="3.5" height="1" fill="#dcbd84"/><rect x="514.5" y="226.89999999999998" width="8.5" height="7" fill="#dcbd84"/><rect x="514.5" y="226.09999999999997" width="3.5" height="1" fill="#dcbd84"/><rect x="514.5" y="274.48" width="8.5" height="7" fill="#dcbd84"/><rect x="514.5" y="273.68" width="3.5" height="1" fill="#dcbd84"/><rect x="514.5" y="290.34000000000003" width="8.5" height="7" fill="#dcbd84"/><rect x="514.5" y="289.54" width="3.5" height="1" fill="#dcbd84"/><rect x="514.5" y="306.2" width="8.5" height="7" fill="#dcbd84"/><rect x="514.5" y="305.4" width="3.5" height="1" fill="#dcbd84"/><rect x="514.5" y="322.05999999999995" width="8.5" height="7" fill="#dcbd84"/><rect x="514.5" y="321.25999999999993" width="3.5" height="1" fill="#dcbd84"/><rect x="514.5" y="337.91999999999996" width="8.5" height="7" fill="#dcbd84"/><rect x="514.5" y="337.11999999999995" width="3.5" height="1" fill="#dcbd84"/><rect x="514.5" y="353.78" width="8.5" height="7" fill="#dcbd84"/><rect x="514.5" y="352.97999999999996" width="3.5" height="1" fill="#dcbd84"/><rect x="514.7" y="240.45999999999998" width="8" height="9" fill="#f3e6c8" stroke="#d6bd85" stroke-width="0.8"/><text x="526" y="264.62" font-family="Liberation Sans" font-weight="700" font-size="8" fill="#3a9a3a" transform="translate(526,0) scale(0.85,1) translate(-526,0)">C#</text><text x="514.6" y="439.08000000000004" font-family="Liberation Sans" font-weight="700" font-size="8" fill="#3a9a3a" transform="translate(514.6,0) scale(0.85,1) translate(-514.6,0)">C#</text><path d="M515,366.14 h4.5 l2,2 v9.3 h-6.5 z" fill="#fff" stroke="#424242" stroke-width="0.9"/><rect x="516.8" y="372.14" width="2" height="2" fill="#555"/><path d="M515,382.0 h4.5 l2,2 v9.3 h-6.5 z" fill="#fff" stroke="#424242" stroke-width="0.9"/><circle cx="516" cy="390.5" r="1.7" fill="#fff" stroke="#424242" stroke-width="0.9"/><path d="M515,397.86 h4.5 l2,2 v9.3 h-6.5 z" fill="#fff" stroke="#424242" stroke-width="0.9"/><path d="M514,400.86 v3 l1.5,1.5 l1.5,-1.5 v-3 M515.5,405.36 v3" stroke="#424242" stroke-width="0.9" fill="#fff"/><path d="M515,413.72 h4.5 l2,2 v9.3 h-6.5 z" fill="#fff" stroke="#424242" stroke-width="0.9"/><path d="M514.5,424.22 h7" stroke="#1c5fa8" stroke-width="1.2" stroke-dasharray="1,1"/><path d="M515,445.43999999999994 h4.5 l2,2 v9.3 h-6.5 z" fill="#fff" stroke="#424242" stroke-width="0.9"/><path d="M514,448.43999999999994 v3 l1.5,1.5 l1.5,-1.5 v-3 M515.5,452.93999999999994 v3" stroke="#424242" stroke-width="0.9" fill="#fff"/><polygon points="612.5,486.5 626.5,486.5 621,496.5 620.8,511 618.6,513 618.2,497" fill="#b9bcc2"/><polygon points="624.3,497 629.5,486.8 632.5,486.8 643,505 643,511 640.5,509" fill="#b9bcc2"/><polygon points="70.7,494.4 74.3,494.4 72.5,496.6" fill="#1e1e1e"/><polygon points="83.5,492.5 83.5,498.5 80.5,495.5" fill="#c8ccd4"/></svg>
</body></html>
